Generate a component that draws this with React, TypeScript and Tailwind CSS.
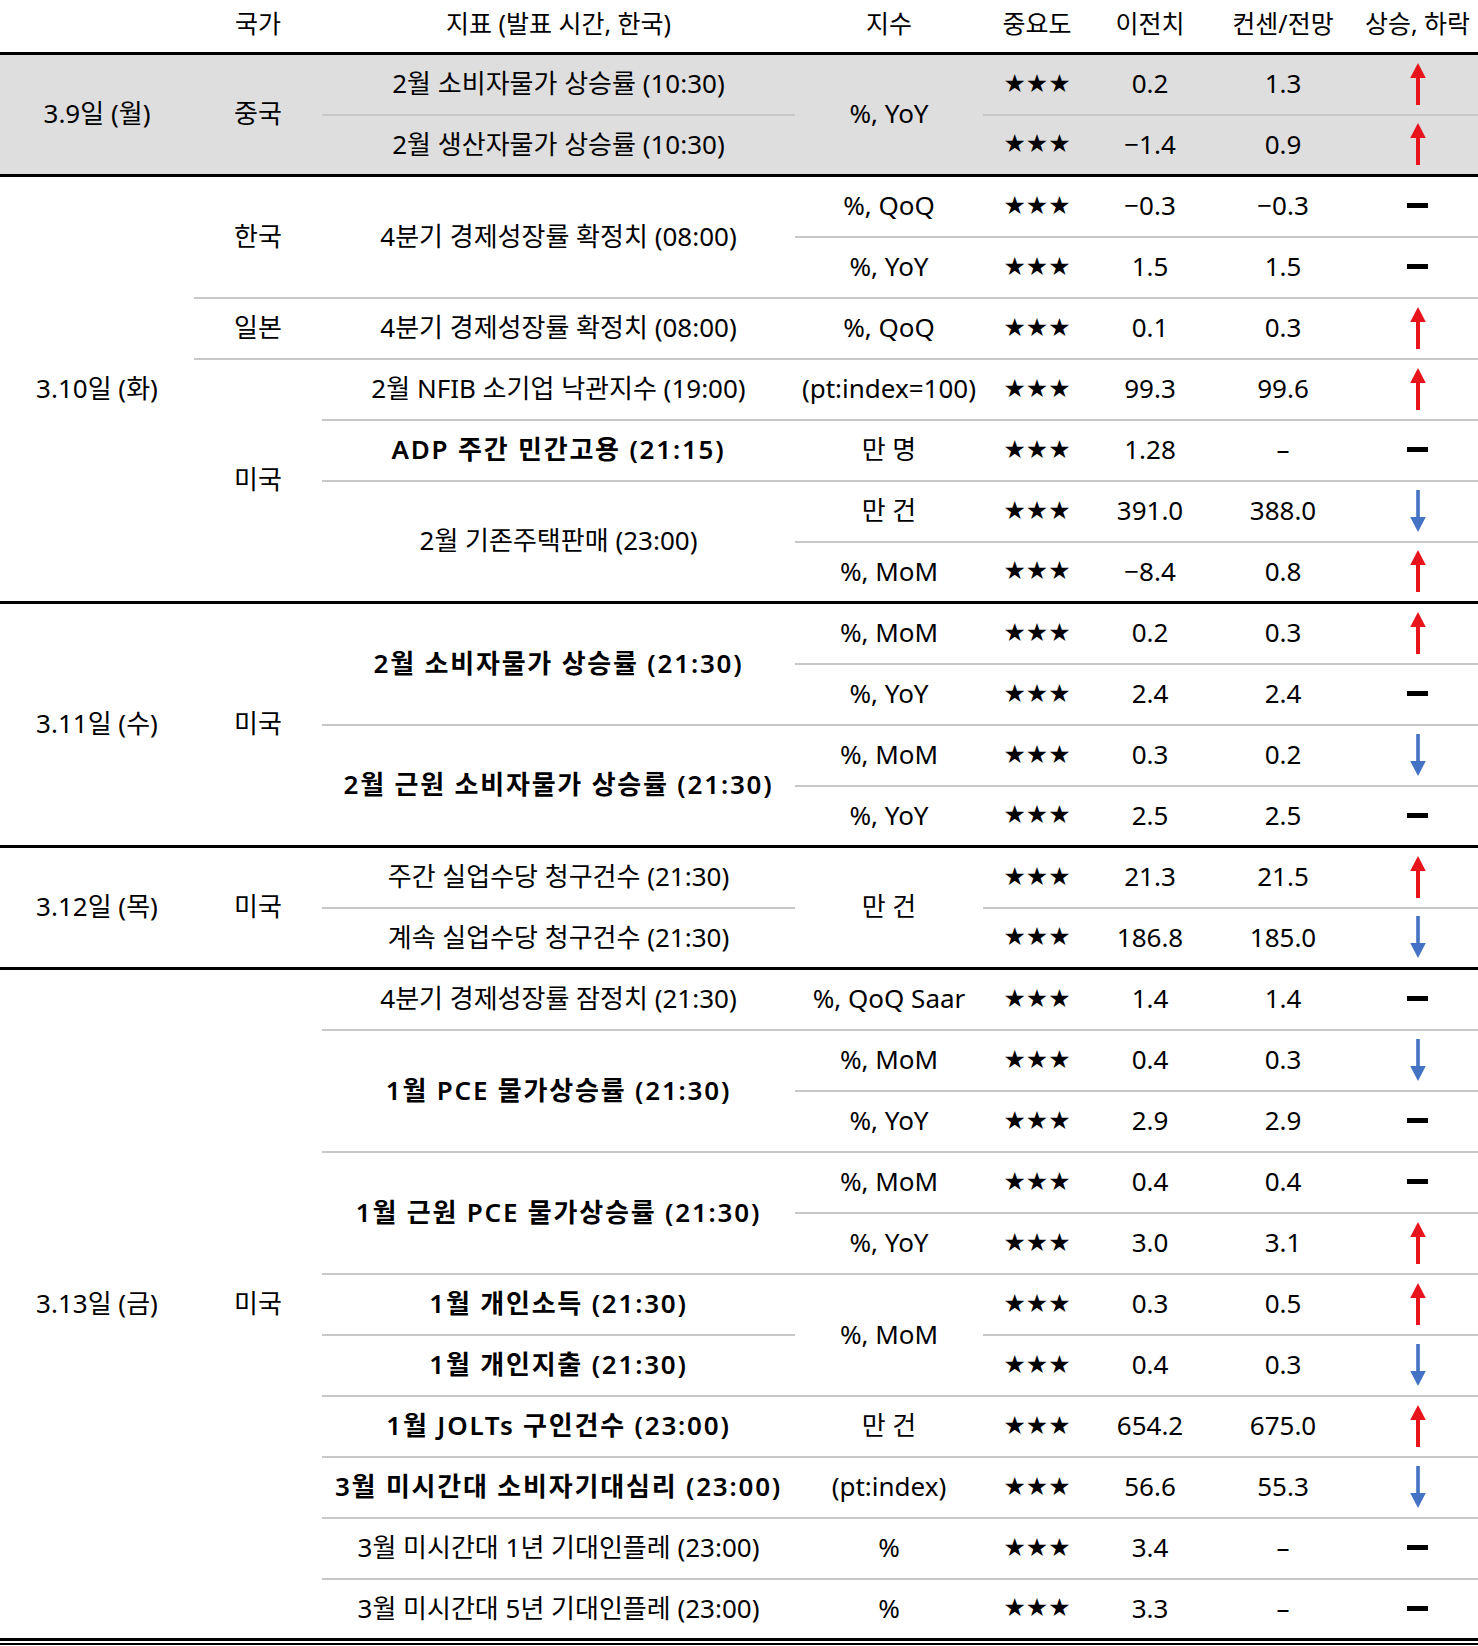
import type { ReactNode } from 'react'

// ─── Bordes ─────────────────────────────────────────────────────────────────

const G = 'border-b-2 border-[#c8c8c8]'   // línea gris dentro del grupo
const K = 'border-b-[3px] border-black'   // línea negra fin de grupo

type Trend = 'up' | 'down' | 'flat'

function Arrow({ trend }: { trend: Trend }) {
  if (trend === 'flat') {
    return <div className="w-[21px] h-[5px] bg-black" />
  }
  if (trend === 'up') {
    return (
      <svg width="16" height="42" viewBox="0 0 16 42">
        <polygon points="8,0 15.8,15 0.2,15" fill="#e8141c" />
        <rect x="6" y="13" width="4" height="29" fill="#e8141c" />
      </svg>
    )
  }
  return (
    <svg width="16" height="42" viewBox="0 0 16 42">
      <rect x="6.2" y="0" width="3.6" height="29" fill="#4472c4" />
      <polygon points="8,42 15.8,27 0.2,27" fill="#4472c4" />
    </svg>
  )
}

function Td({
  children, line, rows, bold, className = '',
}: {
  children?: ReactNode
  line: string
  rows?: number
  bold?: boolean
  className?: string
}) {
  return (
    <td
      rowSpan={rows}
      className={`p-0 pb-[2px] text-center align-middle whitespace-nowrap ${line} ${bold ? 'font-semibold tracking-[1.8px]' : ''} ${className}`}
    >
      {children}
    </td>
  )
}

// columnas E-H: estrellas, previo, consenso, tendencia
function Vals({ prev, cons, trend, line }: { prev: string; cons: string; trend: Trend; line: string }) {
  return (
    <>
      <Td line={line} className="font-['DejaVu_Sans'] text-[25px]">★★★</Td>
      <Td line={line}>{prev}</Td>
      <Td line={line}>{cons}</Td>
      <Td line={line}>
        <div className="flex justify-center">
          <Arrow trend={trend} />
        </div>
      </Td>
    </>
  )
}

const HEAD = ['', '국가', '지표 (발표 시간, 한국)', '지수', '중요도', '이전치', '컨센/전망', '상승, 하락']

export default function App() {
  return (
    <div className="w-[1478px] bg-white text-black text-[26px] font-['Noto_Sans','Noto_Sans_CJK_KR',sans-serif]">
      <table className="w-[1478px] table-fixed border-separate border-spacing-0">
        <colgroup>
          <col className="w-[194px]" />
          <col className="w-[128px]" />
          <col className="w-[473px]" />
          <col className="w-[188px]" />
          <col className="w-[108px]" />
          <col className="w-[118px]" />
          <col className="w-[148px]" />
          <col className="w-[121px]" />
        </colgroup>
        <thead>
          <tr className="h-[55px]">
            {HEAD.map((h, i) => (
              <th key={i} className={`p-0 pb-1 text-[25px] font-normal text-center align-middle whitespace-nowrap ${K}`}>{h}</th>
            ))}
          </tr>
        </thead>

        {/* ── 3.9 ── */}
        <tbody className="bg-[#dedede]">
          <tr className="h-[61px]">
            <Td line={K} rows={2}>3.9일 (월)</Td>
            <Td line={K} rows={2}>중국</Td>
            <Td line={G}>2월 소비자물가 상승률 (10:30)</Td>
            <Td line={K} rows={2}>%, YoY</Td>
            <Vals prev="0.2" cons="1.3" trend="up" line={G} />
          </tr>
          <tr className="h-[61px]">
            <Td line={K}>2월 생산자물가 상승률 (10:30)</Td>
            <Vals prev="−1.4" cons="0.9" trend="up" line={K} />
          </tr>
        </tbody>

        {/* ── 3.10 ── */}
        <tbody>
          <tr className="h-[61px]">
            <Td line={K} rows={7}>3.10일 (화)</Td>
            <Td line={G} rows={2}>한국</Td>
            <Td line={G} rows={2}>4분기 경제성장률 확정치 (08:00)</Td>
            <Td line={G}>%, QoQ</Td>
            <Vals prev="−0.3" cons="−0.3" trend="flat" line={G} />
          </tr>
          <tr className="h-[61px]">
            <Td line={G}>%, YoY</Td>
            <Vals prev="1.5" cons="1.5" trend="flat" line={G} />
          </tr>
          <tr className="h-[61px]">
            <Td line={G}>일본</Td>
            <Td line={G}>4분기 경제성장률 확정치 (08:00)</Td>
            <Td line={G}>%, QoQ</Td>
            <Vals prev="0.1" cons="0.3" trend="up" line={G} />
          </tr>
          <tr className="h-[61px]">
            <Td line={K} rows={4}>미국</Td>
            <Td line={G}>2월 NFIB 소기업 낙관지수 (19:00)</Td>
            <Td line={G}>(pt:index=100)</Td>
            <Vals prev="99.3" cons="99.6" trend="up" line={G} />
          </tr>
          <tr className="h-[61px]">
            <Td line={G} bold>ADP 주간 민간고용 (21:15)</Td>
            <Td line={G}>만 명</Td>
            <Vals prev="1.28" cons="–" trend="flat" line={G} />
          </tr>
          <tr className="h-[61px]">
            <Td line={K} rows={2}>2월 기존주택판매 (23:00)</Td>
            <Td line={G}>만 건</Td>
            <Vals prev="391.0" cons="388.0" trend="down" line={G} />
          </tr>
          <tr className="h-[61px]">
            <Td line={K}>%, MoM</Td>
            <Vals prev="−8.4" cons="0.8" trend="up" line={K} />
          </tr>
        </tbody>

        {/* ── 3.11 ── */}
        <tbody>
          <tr className="h-[61px]">
            <Td line={K} rows={4}>3.11일 (수)</Td>
            <Td line={K} rows={4}>미국</Td>
            <Td line={G} rows={2} bold>2월 소비자물가 상승률 (21:30)</Td>
            <Td line={G}>%, MoM</Td>
            <Vals prev="0.2" cons="0.3" trend="up" line={G} />
          </tr>
          <tr className="h-[61px]">
            <Td line={G}>%, YoY</Td>
            <Vals prev="2.4" cons="2.4" trend="flat" line={G} />
          </tr>
          <tr className="h-[61px]">
            <Td line={K} rows={2} bold>2월 근원 소비자물가 상승률 (21:30)</Td>
            <Td line={G}>%, MoM</Td>
            <Vals prev="0.3" cons="0.2" trend="down" line={G} />
          </tr>
          <tr className="h-[61px]">
            <Td line={K}>%, YoY</Td>
            <Vals prev="2.5" cons="2.5" trend="flat" line={K} />
          </tr>
        </tbody>

        {/* ── 3.12 ── */}
        <tbody>
          <tr className="h-[61px]">
            <Td line={K} rows={2}>3.12일 (목)</Td>
            <Td line={K} rows={2}>미국</Td>
            <Td line={G}>주간 실업수당 청구건수 (21:30)</Td>
            <Td line={K} rows={2}>만 건</Td>
            <Vals prev="21.3" cons="21.5" trend="up" line={G} />
          </tr>
          <tr className="h-[61px]">
            <Td line={K}>계속 실업수당 청구건수 (21:30)</Td>
            <Vals prev="186.8" cons="185.0" trend="down" line={K} />
          </tr>
        </tbody>

        {/* ── 3.13 ── */}
        <tbody>
          <tr className="h-[61px]">
            <Td line={K} rows={11}>3.13일 (금)</Td>
            <Td line={K} rows={11}>미국</Td>
            <Td line={G}>4분기 경제성장률 잠정치 (21:30)</Td>
            <Td line={G}>%, QoQ Saar</Td>
            <Vals prev="1.4" cons="1.4" trend="flat" line={G} />
          </tr>
          <tr className="h-[61px]">
            <Td line={G} rows={2} bold>1월 PCE 물가상승률 (21:30)</Td>
            <Td line={G}>%, MoM</Td>
            <Vals prev="0.4" cons="0.3" trend="down" line={G} />
          </tr>
          <tr className="h-[61px]">
            <Td line={G}>%, YoY</Td>
            <Vals prev="2.9" cons="2.9" trend="flat" line={G} />
          </tr>
          <tr className="h-[61px]">
            <Td line={G} rows={2} bold>1월 근원 PCE 물가상승률 (21:30)</Td>
            <Td line={G}>%, MoM</Td>
            <Vals prev="0.4" cons="0.4" trend="flat" line={G} />
          </tr>
          <tr className="h-[61px]">
            <Td line={G}>%, YoY</Td>
            <Vals prev="3.0" cons="3.1" trend="up" line={G} />
          </tr>
          <tr className="h-[61px]">
            <Td line={G} bold>1월 개인소득 (21:30)</Td>
            <Td line={G} rows={2}>%, MoM</Td>
            <Vals prev="0.3" cons="0.5" trend="up" line={G} />
          </tr>
          <tr className="h-[61px]">
            <Td line={G} bold>1월 개인지출 (21:30)</Td>
            <Vals prev="0.4" cons="0.3" trend="down" line={G} />
          </tr>
          <tr className="h-[61px]">
            <Td line={G} bold>1월 JOLTs 구인건수 (23:00)</Td>
            <Td line={G}>만 건</Td>
            <Vals prev="654.2" cons="675.0" trend="up" line={G} />
          </tr>
          <tr className="h-[61px]">
            <Td line={G} bold>3월 미시간대 소비자기대심리 (23:00)</Td>
            <Td line={G}>(pt:index)</Td>
            <Vals prev="56.6" cons="55.3" trend="down" line={G} />
          </tr>
          <tr className="h-[61px]">
            <Td line={G}>3월 미시간대 1년 기대인플레 (23:00)</Td>
            <Td line={G}>%</Td>
            <Vals prev="3.4" cons="–" trend="flat" line={G} />
          </tr>
          <tr className="h-[61px]">
            <Td line={K}>3월 미시간대 5년 기대인플레 (23:00)</Td>
            <Td line={K}>%</Td>
            <Vals prev="3.3" cons="–" trend="flat" line={K} />
          </tr>
        </tbody>
      </table>
      {/* doble línea inferior */}
      <div className="mt-[2px] h-[2px] bg-black" />
    </div>
  )
}
